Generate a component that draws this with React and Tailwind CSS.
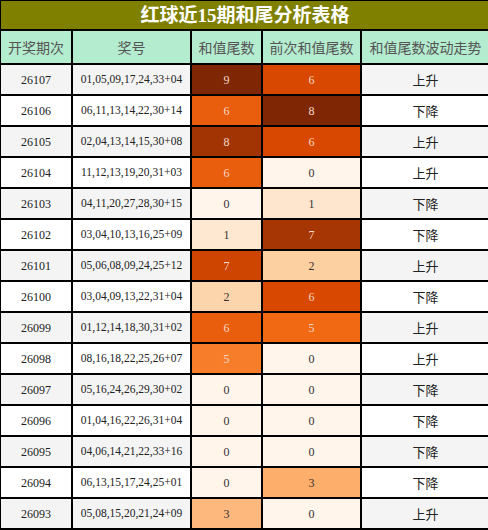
import React from 'react';

const rows = [
  ['26107', '01,05,09,17,24,33+04', 9, 6, '上升'],
  ['26106', '06,11,13,14,22,30+14', 6, 8, '下降'],
  ['26105', '02,04,13,14,15,30+08', 8, 6, '上升'],
  ['26104', '11,12,13,19,20,31+03', 6, 0, '上升'],
  ['26103', '04,11,20,27,28,30+15', 0, 1, '下降'],
  ['26102', '03,04,10,13,16,25+09', 1, 7, '下降'],
  ['26101', '05,06,08,09,24,25+12', 7, 2, '上升'],
  ['26100', '03,04,09,13,22,31+04', 2, 6, '下降'],
  ['26099', '01,12,14,18,30,31+02', 6, 5, '上升'],
  ['26098', '08,16,18,22,25,26+07', 5, 0, '上升'],
  ['26097', '05,16,24,26,29,30+02', 0, 0, '下降'],
  ['26096', '01,04,16,22,26,31+04', 0, 0, '下降'],
  ['26095', '04,06,14,21,22,33+16', 0, 0, '下降'],
  ['26094', '06,13,15,17,24,25+01', 0, 3, '下降'],
  ['26093', '05,08,15,20,21,24+09', 3, 0, '上升'],
];

// matplotlib "Oranges"
const stops = ['#fff5eb', '#fee6ce', '#fdd0a2', '#fdae6b', '#fd8d3c', '#f16913', '#d94801', '#a63603', '#7f2704'];

const hex = (h) => [1, 3, 5].map((i) => parseInt(h.slice(i, i + 2), 16));

function oranges(t) {
  const p = Math.max(0, Math.min(1, t)) * (stops.length - 1);
  const i = Math.min(Math.floor(p), stops.length - 2);
  const f = p - i;
  const a = hex(stops[i]);
  const b = hex(stops[i + 1]);
  const c = a.map((v, k) => Math.round(v + (b[k] - v) * f));
  return `rgb(${c.join(',')})`;
}

const max3 = Math.max(...rows.map((r) => r[2]));
const max4 = Math.max(...rows.map((r) => r[3]));

const cjk = { fontFamily: '"Noto Sans CJK SC", sans-serif' };

function HeatCell({ value, max }) {
  const t = value / max;
  return (
    <td
      className={`border-2 border-black text-center text-[12px] ${t >= 0.5 ? 'text-[#f3d9c8]' : 'text-[#333]'}`}
      style={{ backgroundColor: oranges(t) }}
    >
      {value}
    </td>
  );
}

export default function App() {
  return (
    <div className="w-[488px] h-[530px] overflow-hidden bg-white">
      <table
        className="table-fixed border-collapse w-[490px] -ml-px -mt-px"
        style={{ fontFamily: '"Liberation Serif", "Noto Sans CJK SC", serif' }}
      >
        <colgroup>
          <col className="w-[72px]" />
          <col className="w-[119px]" />
          <col className="w-[71px]" />
          <col className="w-[99px]" />
          <col className="w-[129px]" />
        </colgroup>
        <thead>
          <tr>
            <th
              colSpan={5}
              className="h-[30px] border-2 border-black bg-[#808000] text-white text-[19px] font-bold leading-none"
              style={{ fontFamily: '"Liberation Serif", "Noto Sans CJK SC", serif' }}
            >
              红球近15期和尾分析表格
            </th>
          </tr>
          <tr className="bg-[#b3ecce]">
            {['开奖期次', '奖号', '和值尾数', '前次和值尾数', '和值尾数波动走势'].map((h) => (
              <th key={h} className="h-[34px] border-2 border-black text-[14px] font-normal text-[#555]" style={cjk}>
                {h}
              </th>
            ))}
          </tr>
        </thead>
        <tbody>
          {rows.map((r, i) => (
            <tr key={r[0]} className={i % 2 === 0 ? 'bg-[#f4f4f4]' : 'bg-white'}>
              <td className="h-[31px] border-2 border-black text-center text-[12px] text-[#222]">{r[0]}</td>
              <td className="border-2 border-black text-center text-[11.5px] text-[#222]">{r[1]}</td>
              <HeatCell value={r[2]} max={max3} />
              <HeatCell value={r[3]} max={max4} />
              <td className="border-2 border-black text-center text-[13px] text-[#222]" style={cjk}>
                {r[4]}
              </td>
            </tr>
          ))}
        </tbody>
      </table>
    </div>
  );
}
